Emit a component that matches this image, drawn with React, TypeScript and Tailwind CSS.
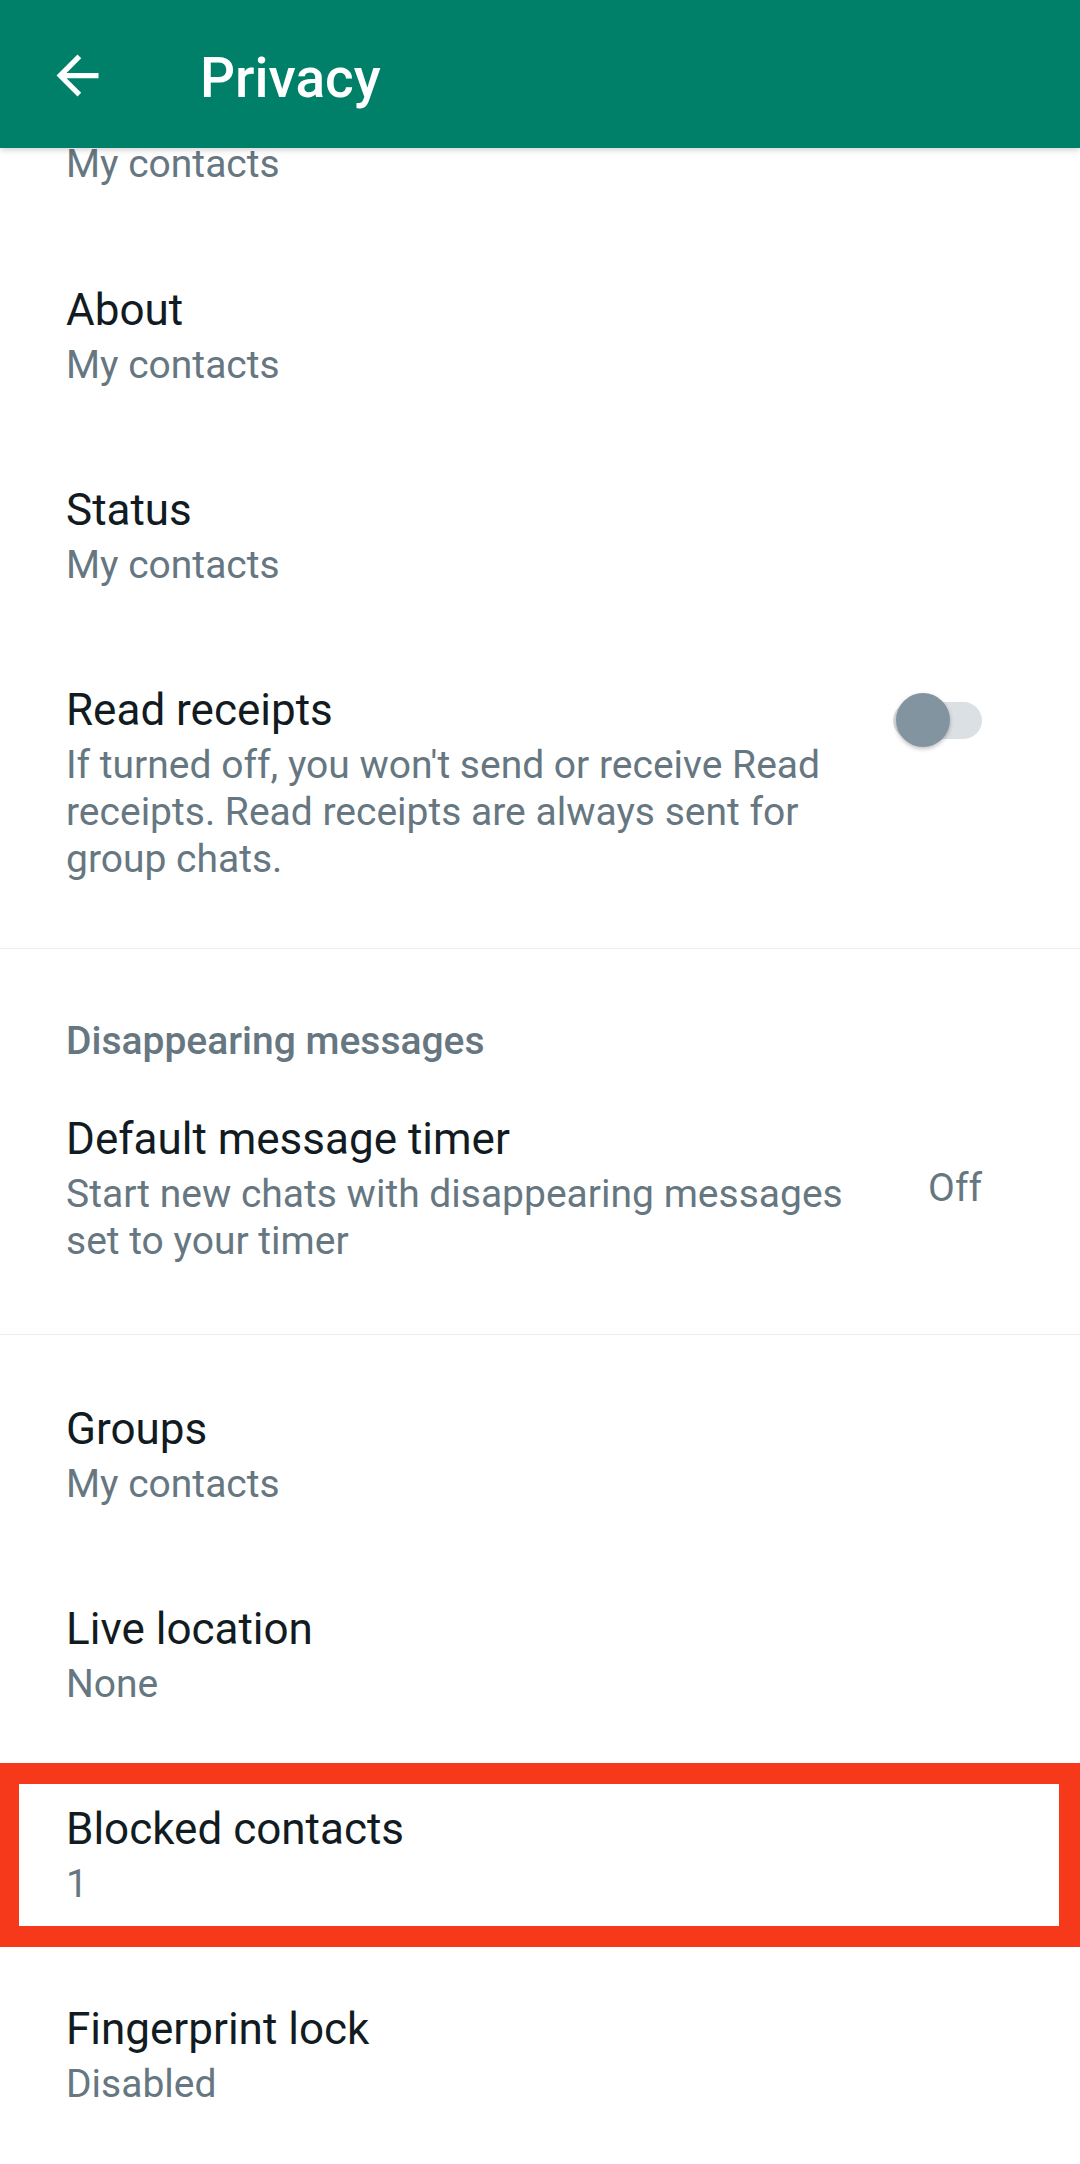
import type { ReactNode } from 'react';

type Item = { title: string; sub: string; mark?: boolean };

const TOP: Item[] = [
  { title: 'About', sub: 'My contacts' },
  { title: 'Status', sub: 'My contacts' },
];

const BOTTOM: Item[] = [
  { title: 'Groups', sub: 'My contacts' },
  { title: 'Live location', sub: 'None' },
  { title: 'Blocked contacts', sub: '1', mark: true },
  { title: 'Fingerprint lock', sub: 'Disabled' },
];

function BackArrow() {
  return (
    <svg viewBox="0 0 24 24" className="w-[63px] h-[63px] mt-[3px] shrink-0" fill="#ffffff">
      <path d="M20 11H7.83l5.59-5.59L12 4l-8 8 8 8 1.41-1.41L7.83 13H20v-2z" />
    </svg>
  );
}

function Row({ title, children, right, mark }: { title: string; children: ReactNode; right?: ReactNode; mark?: boolean }) {
  return (
    <div className="relative flex pl-[66px] pr-[98px] pt-[48px] pb-[47px]">
      <div className="flex-1 min-w-0">
        <div className="text-[44px] leading-[52px] text-[#111b21]">{title}</div>
        <div className="mt-[6px] text-[39px] leading-[47px] text-[#667781]">{children}</div>
      </div>
      {right}
      {/* annotation box drawn over the row */}
      {mark && (
        <div className="absolute left-0 right-0 top-[8px] bottom-[8px] border-[21px] border-l-[19px] border-[#f5391a]" />
      )}
    </div>
  );
}

function Toggle() {
  return (
    <div className="relative ml-[24px] mt-[9px] w-[89px] h-[54px] shrink-0">
      <div className="absolute left-0 top-[9px] w-[89px] h-[37px] rounded-full bg-[#dbe0e4]" />
      <div className="absolute left-[3px] top-0 w-[54px] h-[54px] rounded-full bg-[#8194a0] shadow-[0_2px_4px_rgba(0,0,0,0.25)]" />
    </div>
  );
}

function Divider({ wide }: { wide?: boolean }) {
  return <div className={`${wide ? 'mt-[22px]' : 'mt-[18px]'} mb-[20px] h-px bg-[#e9edef]`} />;
}

export default function App() {
  return (
    <div className="w-[1080px] h-[2164px] overflow-hidden bg-white font-['Roboto',sans-serif]">
      <header className="relative z-10 h-[148px] bg-[#008069] flex items-center pl-[46px] shadow-[0_2px_6px_rgba(0,0,0,0.18)]">
        <BackArrow />
        <h1 className="ml-[91px] pt-[9px] text-[55px] leading-none font-medium text-white">Privacy</h1>
      </header>

      {/* scrolled list: tail of the "Profile photo" row peeks out under the app bar */}
      <div className="-mt-[7px] pl-[66px] pb-[48px] text-[39px] leading-[47px] text-[#667781]">My contacts</div>

      {TOP.map(it => (
        <Row key={it.title} title={it.title}>{it.sub}</Row>
      ))}
      <Row title="Read receipts" right={<Toggle />}>
        If turned off, you won't send or receive Read receipts. Read receipts are always sent for group chats.
      </Row>
      <Divider />

      <div className="pl-[66px] pt-[49px] text-[39px] leading-[47px] font-medium text-[#667781]">
        Disappearing messages
      </div>
      <Row
        title="Default message timer"
        right={<div className="ml-[68px] self-center pb-[2px] text-[39px] leading-[47px] text-[#667781]">Off</div>}
      >
        Start new chats with disappearing messages set to your timer
      </Row>
      <Divider wide />

      {BOTTOM.map(it => (
        <Row key={it.title} title={it.title} mark={it.mark}>{it.sub}</Row>
      ))}
    </div>
  );
}
